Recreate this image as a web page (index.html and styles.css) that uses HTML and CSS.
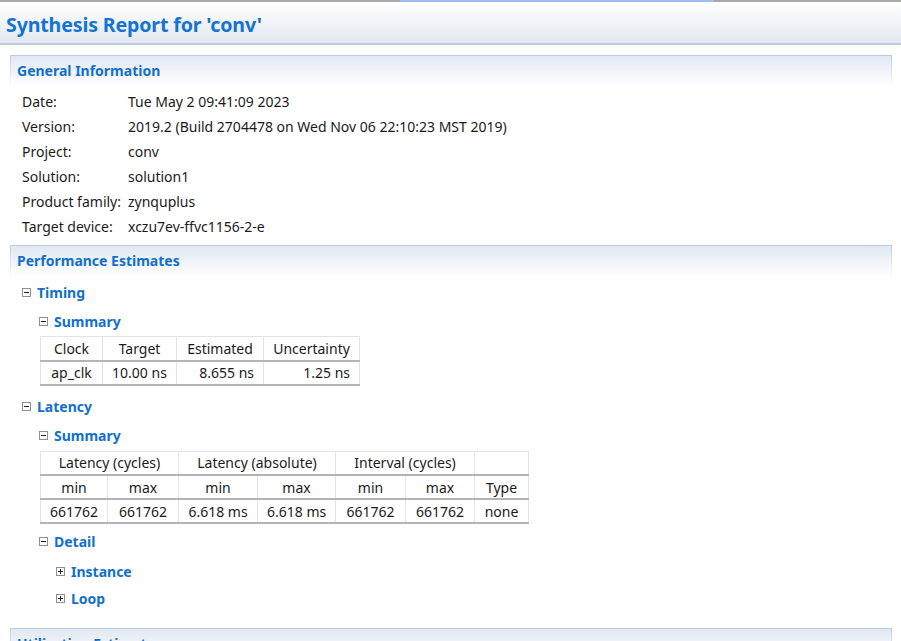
FILE: index.html
```html
<!DOCTYPE html>
<html>
<head>
<meta charset="utf-8">
<link rel="stylesheet" href="styles.css">
</head>
<body>
<div class="topline"><div class="topline-blue"></div></div>
<header class="title-bar"><h1 class="title">Synthesis Report for 'conv'</h1></header>
<main class="content">
  <section class="section">
    <div class="section-head">General Information</div>
    <div class="info">
      <div class="info-row"><span class="info-label">Date:</span><span>Tue May 2 09:41:09 2023</span></div>
      <div class="info-row"><span class="info-label">Version:</span><span>2019.2 (Build 2704478 on Wed Nov 06 22:10:23 MST 2019)</span></div>
      <div class="info-row"><span class="info-label">Project:</span><span>conv</span></div>
      <div class="info-row"><span class="info-label">Solution:</span><span>solution1</span></div>
      <div class="info-row"><span class="info-label">Product family:</span><span>zynquplus</span></div>
      <div class="info-row"><span class="info-label">Target device:</span><span>xczu7ev-ffvc1156-2-e</span></div>
    </div>
  </section>
  <section class="section">
    <div class="section-head">Performance Estimates</div>
    <div class="tree">
      <div class="node lvl1 h-timing"><span class="tg minus"></span>Timing</div>
      <div class="node lvl2 h-sum1"><span class="tg minus"></span>Summary</div>
      <table class="grid t1">
        <colgroup><col style="width:62px"><col style="width:74px"><col style="width:87px"><col style="width:96px"></colgroup>
        <tr class="hrow"><th>Clock</th><th>Target</th><th>Estimated</th><th>Uncertainty</th></tr>
        <tr class="drow"><td class="c">ap_clk</td><td class="c">10.00 ns</td><td class="r">8.655 ns</td><td class="r">1.25 ns</td></tr>
      </table>
      <div class="node lvl1 h-lat"><span class="tg minus"></span>Latency</div>
      <div class="node lvl2 h-sum2"><span class="tg minus"></span>Summary</div>
      <table class="grid t2">
        <colgroup><col style="width:67px"><col style="width:71px"><col style="width:79px"><col style="width:78px"><col style="width:70px"><col style="width:69px"><col style="width:54px"></colgroup>
        <tr class="hrow"><th colspan="2">Latency (cycles)</th><th colspan="2">Latency (absolute)</th><th colspan="2">Interval (cycles)</th><th></th></tr>
        <tr class="hrow"><th>min</th><th>max</th><th>min</th><th>max</th><th>min</th><th>max</th><th>Type</th></tr>
        <tr class="drow"><td class="c">661762</td><td class="c">661762</td><td class="c">6.618 ms</td><td class="c">6.618 ms</td><td class="c">661762</td><td class="c">661762</td><td class="c">none</td></tr>
      </table>
      <div class="node lvl2 h-detail"><span class="tg minus"></span>Detail</div>
      <div class="node lvl3 h-inst"><span class="tg plus"></span>Instance</div>
      <div class="node lvl3 h-loop"><span class="tg plus"></span>Loop</div>
    </div>
  </section>
  <section class="section">
    <div class="section-head">Utilization Estimates</div>
  </section>
</main>
</body>
</html>
```
FILE: styles.css
```css
* { box-sizing: border-box; }
html, body { margin: 0; padding: 0; background: #fff; }
body {
  font-family: "Noto Sans", "Open Sans", sans-serif;
  font-size: 14px;
  color: #1b1b1b;
  width: 901px;
  height: 641px;
  overflow: hidden;
}
.topline { height: 2px; background: #a9a9a9; position: relative; }
.topline-blue { position: absolute; left: 400px; top: 0; width: 314px; height: 2px; background: #9dbef0; }
.title-bar {
  height: 43px;
  background: linear-gradient(#ffffff, #e2e8f1);
  border-bottom: 2px solid #b9cbdd;
  display: flex;
  align-items: center;
  padding: 3px 0 0 6px;
}
.title {
  margin: 0;
  font-size: 19.6px;
  font-weight: bold;
  color: #1473d3;
  letter-spacing: -0.15px;
}
.content { padding: 10px 9px 0 10px; }
.section-head {
  height: 31px;
  border: 1px solid #bccbdc;
  border-bottom: none;
  border-radius: 3px 3px 0 0;
  border-image: linear-gradient(#bccbdc, #e6edf5 70%, rgba(255,255,255,0)) 1;
  background: linear-gradient(#e1e8f2, #ffffff);
  color: #1170cf;
  font-weight: bold;
  font-size: 14px;
  padding: 5px 0 0 6px;
}
.info { padding: 3px 0 6px 12px; }
.info-row { height: 25px; display: flex; align-items: center; }
.info-label { width: 106px; flex: none; }
.tree { padding: 0 0 20px 12px; }
.node {
  display: flex;
  align-items: center;
  color: #1170cf;
  font-weight: bold;
  height: 20px;
}
.lvl1 { padding-left: 0; }
.lvl2 { padding-left: 17px; }
.lvl3 { padding-left: 34px; }
.tg {
  width: 9px;
  height: 9px;
  border: 1px solid #8f8f8f;
  background: #fff;
  margin-right: 6px;
  position: relative;
  flex: none;
}
.tg::before {
  content: "";
  position: absolute;
  left: 1px; top: 3px;
  width: 5px; height: 1px;
  background: #222;
}
.tg.plus::after {
  content: "";
  position: absolute;
  left: 3px; top: 1px;
  width: 1px; height: 5px;
  background: #222;
}
.h-timing { margin-top: 6px; }
.h-sum1 { margin-top: 9px; }
.h-lat { margin-top: 11px; }
.h-sum2 { margin-top: 9px; }
.h-detail { margin-top: 7px; }
.h-inst { margin-top: 10px; }
.h-loop { margin-top: 7px; }
.grid {
  border-collapse: collapse;
  table-layout: fixed;
  margin-left: 18px;
  margin-top: 5px;
}
.t1 { width: 319px; }
.t2 { width: 488px; }
.grid th, .grid td {
  height: 24px;
  padding: 0 9px;
  font-weight: normal;
  white-space: nowrap;
  border-left: 1px solid #e3e3e3;
  border-right: 1px solid #e3e3e3;
  border-top: 1px solid #e3e3e3;
  border-bottom: 2px solid #b4b4b4;
  text-align: center;
}
.grid td.r { text-align: right; }
.grid td.c { text-align: center; }
```
